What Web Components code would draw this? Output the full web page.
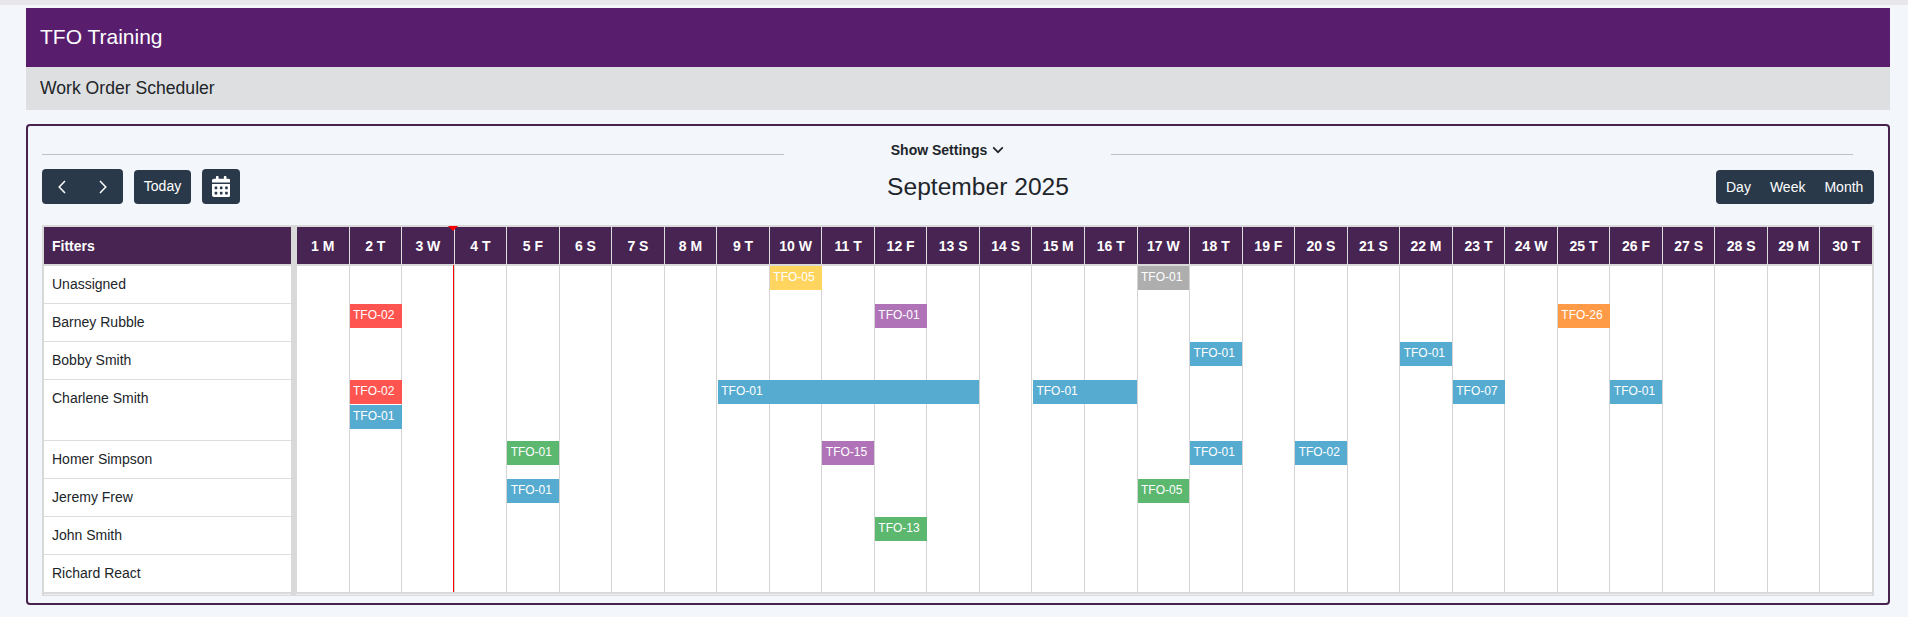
<!DOCTYPE html>
<html lang="en">
<head>
<meta charset="utf-8">
<title>TFO Training</title>
<style>
html,body{margin:0;padding:0;background:#f3f6fa;font-family:"Liberation Sans",Arial,sans-serif;color:#212529}
</style>
</head>
<body>
<wo-page>
  <wo-app-bar>TFO Training</wo-app-bar>
  <wo-sub-bar>Work Order Scheduler</wo-sub-bar>
  <wo-card>
    <wo-settings-toggle>Show Settings</wo-settings-toggle>
    <wo-toolbar>September 2025</wo-toolbar>
    <wo-scheduler></wo-scheduler>
  </wo-card>
</wo-page>
<script>
function shadow(el, html){ el.attachShadow({mode:'open'}).innerHTML = html; return el.shadowRoot; }

customElements.define('wo-page', class extends HTMLElement{
  constructor(){ super(); shadow(this, `<style>
    :host{display:block;min-height:617px;box-sizing:border-box}
    .strip{height:5px;background:#e8e6ea;margin-bottom:3px}
    .wrap{padding:0 18px 12px 26px;display:flex;flex-direction:column}
  </style><div class="strip"></div><div class="wrap"><slot></slot></div>`); }
});

customElements.define('wo-app-bar', class extends HTMLElement{
  constructor(){ super(); shadow(this, `<style>
    :host{display:flex;align-items:center;height:59px;box-sizing:border-box;padding:0 14px 2px;background:#591d6e;color:#fff;font-size:21px}
  </style><slot></slot>`); }
});

customElements.define('wo-sub-bar', class extends HTMLElement{
  constructor(){ super(); shadow(this, `<style>
    :host{display:flex;align-items:center;height:43px;box-sizing:border-box;padding:0 14px;background:#dedfe1;color:#212529;font-size:17.6px;margin-bottom:14px}
  </style><slot></slot>`); }
});

customElements.define('wo-card', class extends HTMLElement{
  constructor(){ super(); shadow(this, `<style>
    :host{display:block;border:2px solid #47234f;border-radius:4px;padding:14px 14px 7px;height:481px;box-sizing:border-box}
  </style><slot></slot>`); }
});

customElements.define('wo-settings-toggle', class extends HTMLElement{
  constructor(){ super(); shadow(this, `<style>
    :host{display:flex;align-items:center;height:29px;font-size:14px;font-weight:700;color:#212529}
    .line{width:742px;height:1px;background:#bfc3c9;flex:none}
    .mid{width:327px;flex:none;display:flex;justify-content:center;align-items:center;gap:5px;margin-top:-9px}
    svg{display:block}
  </style><div class="line"></div><div class="mid"><span><slot></slot></span>
  <svg width="12" height="8" viewBox="0 0 12 8"><path d="M1.2 1.4 6 6.2l4.8-4.8" fill="none" stroke="#212529" stroke-width="1.7"/></svg></div><div class="line"></div>`); }
});

customElements.define('wo-btn', class extends HTMLElement{
  constructor(){ super(); shadow(this, `<style>
    :host{display:inline-flex;align-items:center;justify-content:center;background:#29394a;color:#fff;border-radius:4px;font-size:14px;box-sizing:border-box;height:35px}
  </style><slot></slot>`); }
});

customElements.define('wo-toolbar', class extends HTMLElement{
  constructor(){ super(); shadow(this, `<style>
    :host{display:flex;justify-content:space-between;align-items:center;height:35px;margin:0 0 21px}
    .left{display:flex;align-items:center;gap:11px}
    .title{font-size:24.6px;color:#212529;white-space:nowrap;line-height:35px}
    .nav{width:81px;gap:33px}
    .today{width:57px;height:34px;margin-top:1px;padding-bottom:2px;box-sizing:border-box}
    .cal{width:38px}
    .views{width:158px;height:34px;margin-top:1px;justify-content:flex-start;gap:0;padding-left:10px}
    .views span{white-space:nowrap}
    .views span:nth-child(2){margin-left:19px}
    .views span:nth-child(3){margin-left:19px}
  </style>
  <div class="left">
    <wo-btn class="nav">
      <svg width="8" height="14" viewBox="0 0 8 14"><path d="M7 1 1.2 7 7 13" fill="none" stroke="#fff" stroke-width="1.5"/></svg>
      <svg width="8" height="14" viewBox="0 0 8 14"><path d="M1 1l5.8 6L1 13" fill="none" stroke="#fff" stroke-width="1.5"/></svg>
    </wo-btn>
    <wo-btn class="today">Today</wo-btn>
    <wo-btn class="cal"><svg width="18.4" height="21" viewBox="0 0 448 512"><path fill="#fff" d="M0 464c0 26.5 21.5 48 48 48h352c26.5 0 48-21.5 48-48V192H0v272zm320-196c0-6.6 5.4-12 12-12h40c6.6 0 12 5.4 12 12v40c0 6.6-5.4 12-12 12h-40c-6.6 0-12-5.4-12-12v-40zm0 128c0-6.6 5.4-12 12-12h40c6.6 0 12 5.4 12 12v40c0 6.6-5.4 12-12 12h-40c-6.6 0-12-5.4-12-12v-40zM192 268c0-6.6 5.4-12 12-12h40c6.6 0 12 5.4 12 12v40c0 6.6-5.4 12-12 12h-40c-6.6 0-12-5.4-12-12v-40zm0 128c0-6.6 5.4-12 12-12h40c6.6 0 12 5.4 12 12v40c0 6.6-5.4 12-12 12h-40c-6.6 0-12-5.4-12-12v-40zM64 268c0-6.6 5.4-12 12-12h40c6.6 0 12 5.4 12 12v40c0 6.6-5.4 12-12 12H76c-6.6 0-12-5.4-12-12v-40zm0 128c0-6.6 5.4-12 12-12h40c6.6 0 12 5.4 12 12v40c0 6.6-5.4 12-12 12H76c-6.6 0-12-5.4-12-12v-40zM400 64h-48V16c0-8.8-7.2-16-16-16h-32c-8.8 0-16 7.2-16 16v48H160V16c0-8.8-7.2-16-16-16h-32c-8.8 0-16 7.2-16 16v48H48C21.5 64 0 85.5 0 112v48h448v-48c0-26.5-21.5-48-48-48z"/></svg></wo-btn>
  </div>
  <div class="title"><slot></slot></div>
  <wo-btn class="views"><span>Day</span><span>Week</span><span>Month</span></wo-btn>`); }
});

customElements.define('wo-event', class extends HTMLElement{
  constructor(){ super(); shadow(this, `<style>
    :host{display:block;height:24px;box-sizing:border-box;padding-left:3.5px;background:var(--c);color:#fff;font-size:12px;line-height:22px;white-space:nowrap;overflow:hidden;position:relative;z-index:1}
  </style><slot></slot>`); }
});

const C={red:'#ff5450',blue:'#56abd1',yellow:'#ffd55f',purple:'#b073b8',grey:'#aeaeae',green:'#5cb76f',orange:'#ff9a47'};
const FITTERS=['Unassigned','Barney Rubble','Bobby Smith','Charlene Smith','Homer Simpson','Jeremy Frew','John Smith','Richard React'];
const LETTERS=['M','T','W','T','F','S','S'];
// lane, first day, span, label, colour, left inset, right inset
const R=-0.5;
const EVENTS=[
 [1,10,1,'TFO-05','yellow',1,R],[1,17,1,'TFO-01','grey',1,0],
 [2,2,1,'TFO-02','red',1,R],[2,12,1,'TFO-01','purple',1,R],[2,25,1,'TFO-26','orange',1,R],
 [3,18,1,'TFO-01','blue',1,R],[3,22,1,'TFO-01','blue',1,R],
 [4,2,1,'TFO-02','red',1,R],[5,2,1,'TFO-01','blue',1,R],
 [4,9,5,'TFO-01','blue',1.5,0],[4,15,2,'TFO-01','blue',1.5,R],[4,23,1,'TFO-07','blue',1,R],[4,26,1,'TFO-01','blue',1,R],
 [6,5,1,'TFO-01','green',1,R],[6,11,1,'TFO-15','purple',1,R],[6,18,1,'TFO-01','blue',1,R],[6,20,1,'TFO-02','blue',1,R],
 [7,5,1,'TFO-01','blue',1,R],[7,17,1,'TFO-05','green',1,0],
 [8,12,1,'TFO-13','green',1,R]
];

customElements.define('wo-scheduler', class extends HTMLElement{
  constructor(){
    super();
    const head=Array.from({length:30},(_,i)=>`<div class="dh">${i+1} ${LETTERS[i%7]}</div>`).join('');
    const names=FITTERS.map((n,i)=>`<div class="fit${n==='Charlene Smith'?' tall':''}${i===7?' last':''}">${n}</div>`).join('');
    const cols=Array.from({length:30},(_,i)=>`<div class="col" style="grid-column:${i+1}"></div>`).join('');
    const evs=EVENTS.map(e=>`<wo-event style="grid-row:${e[0]};grid-column:${e[1]} / span ${e[2]};--c:${C[e[4]]};margin:0 ${e[6]}px 0 ${e[5]}px">${e[3]}</wo-event>`).join('');
    shadow(this, `<style>
      :host{display:grid;grid-template-columns:247px 1fr;grid-template-rows:37px 326px 1px;gap:2px 5px;background:#d9d9d9;padding:2px 2px 1px;position:relative;box-sizing:border-box;height:371px}
      .fh{background:#482452;color:#fff;font-weight:700;font-size:14px;display:flex;align-items:center;padding-left:8px}
      .days{display:grid;grid-template-columns:repeat(30,1fr);background:#482452}
      .dh{color:#fff;font-weight:700;font-size:14px;display:flex;align-items:center;justify-content:center;border-left:1px solid #ddd;box-sizing:border-box}
      .dh:first-child{border-left-color:#d9d9d9}
      .fits{background:#fff;display:flex;flex-direction:column}
      .fit{height:38px;box-sizing:border-box;border-bottom:1px solid #ddd;padding:9px 0 0 8px;font-size:14px;line-height:18px;color:#212529}
      .fit.tall{height:61px}
      .fit.last{height:37px;border-bottom:0}
      .body{background:#fff;display:grid;grid-template-columns:repeat(30,1fr);grid-template-rows:38px 38px 38px 25px 36px 38px 38px 38px 37px}
      .col{grid-row:1 / -1;border-left:1px solid #d4d4d4}
      .col:first-child{border-left-color:#d9d9d9}
      .foot{background:#eef0f2}
      .tline{position:absolute;left:411px;top:40px;width:1px;height:327px;background:#f00;z-index:2}
      .tri{position:absolute;left:406px;top:1px;width:0;height:0;border-left:5px solid transparent;border-right:5px solid transparent;border-top:5px solid #f00;z-index:2}
    </style>
    <div class="fh">Fitters</div><div class="days">${head}</div>
    <div class="fits">${names}</div><div class="body">${cols}${evs}</div>
    <div class="foot"></div><div class="foot"></div>
    <div class="tri"></div><div class="tline"></div>`);
  }
});
</script>
</body>
</html>
